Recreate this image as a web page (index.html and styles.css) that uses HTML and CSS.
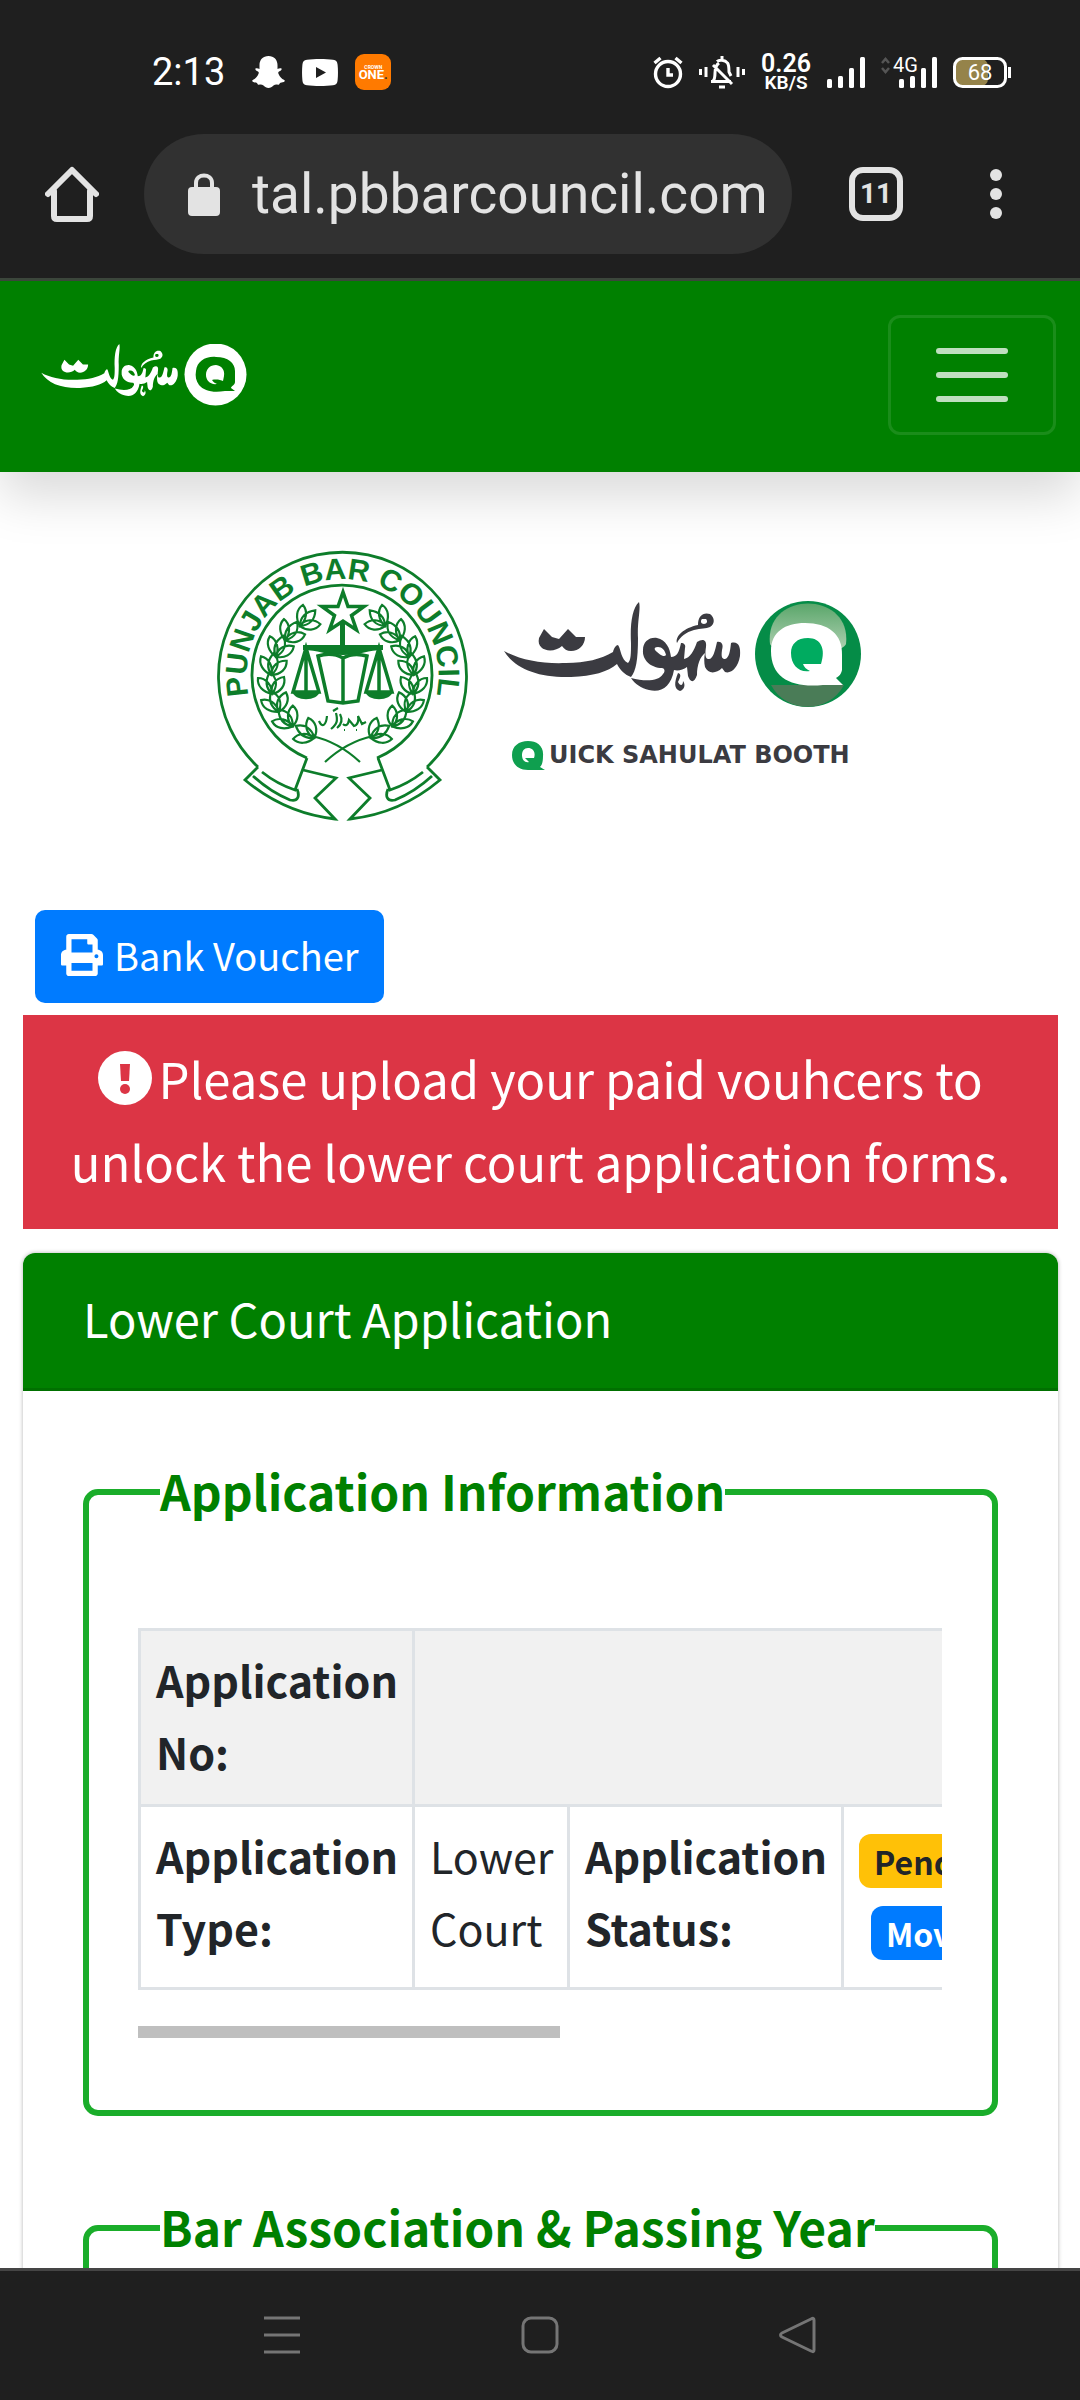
FILE: index.html
```html
<!DOCTYPE html>
<html lang="en">
<head>
<meta charset="utf-8">
<meta name="viewport" content="width=device-width, initial-scale=1">
<title>Lower Court Application</title>
<link rel="stylesheet" href="styles.css">
</head>
<body>
<div class="status">
  <div class="status-left">
    <span class="clock">2:13</span>
    <svg width="33" height="33" viewBox="0 0 33 33" aria-hidden="true"><path fill="#fff" d="M16.500 0c5.500 0 9 3.800 9 9v4c1-.5 2.500-1 4-.6.6 1.300-.5 2.400-2.800 3.400-.7.500-.5 1.400 0 2.500 1 2.400 2.800 4.600 5.600 5.700.9.600.5 1.600-.6 2-1.400.6-3 .4-3.700 1.100-.5.900-.5 1.800-2 1.600-1.800-.2-3.200-.2-4.500.8-1.500 1.400-3 2.500-5 2.500s-3.500-1.100-5-2.500c-1.300-1-2.700-1-4.500-.8-1.500.2-1.500-.7-2-1.600-.7-.7-2.300-.5-3.700-1.100-1.100-.4-1.500-1.400-.6-2 2.800-1.100 4.600-3.300 5.600-5.700.5-1.100.7-2 0-2.500C4 14.800 2.900 13.700 3.500 12.400c1.500-.4 3 .1 4 .6V9c0-5.200 3.500-9 9-9z"/></svg>
    <svg width="36" height="27" viewBox="0 0 36 27" aria-hidden="true"><path fill="#fff" fill-rule="evenodd" d="M5 .8C12-.2 24-.2 31 .8c3.300.4 4.300 2 4.600 5 .5 5 .5 10.400 0 15.400-.3 3-1.300 4.600-4.600 5-7 1-19 1-26 0-3.300-.4-4.300-2-4.600-5-.5-5-.5-10.400 0-15.400C.7 2.800 1.700 1.200 5 .800zM14 8v11l10-5.500z"/></svg>
    <span class="one"><small>CROWN</small><b>ONE<i>.</i></b></span>
  </div>
  <div class="status-right">
    <svg width="30" height="33" viewBox="0 0 30 33" fill="none" stroke="#fff" stroke-width="3.400" aria-hidden="true"><circle cx="15" cy="18" r="12.500"/><path d="M15 12v7h5"/><path d="M1.500 7l6-5M28.500 7l-6-5"/></svg>
    <svg width="46" height="33" viewBox="0 0 46 33" fill="none" stroke="#fff" stroke-width="3" aria-hidden="true"><path d="M1.500 13v6M7 11v10M39 11v10M44.500 13v6M12 25.500h20M14 25c2-2 2-4 2-8 0-5 1-8 4-10M18 5.500c2-2 8-2 10.500 1.500 1.500 2 1.500 6 1.500 9l2 4M14 9l19 19M23 0v4M20 31h6"/></svg>
    <span class="speed"><b>0.26</b><small>KB/S</small></span>
    <svg width="38" height="31" viewBox="0 0 38 31" fill="#fff" aria-hidden="true"><rect y="22" width="5" height="9" rx="1.500"/><rect x="11" y="19" width="5" height="12" rx="1.500"/><rect x="22" y="11" width="5" height="20" rx="1.500"/><rect x="33" width="5" height="31" rx="1.500"/></svg>
    <span class="mobile">
      <svg width="56" height="31" viewBox="0 0 56 31" fill="#fff" aria-hidden="true"><rect x="18" y="22" width="5" height="9" rx="1.500"/><rect x="29" y="19" width="5" height="12" rx="1.500"/><rect x="40" y="11" width="5" height="20" rx="1.500"/><rect x="51" width="5" height="31" rx="1.500"/><path d="M1 6l3.500-4L8 6M1 11l3.500 4L8 11" fill="none" stroke="#555" stroke-width="2.500"/></svg>
      <span class="gen">4G</span>
    </span>
    <span class="battery">
      <svg width="58" height="31" viewBox="0 0 58 31" aria-hidden="true"><rect x="2" y="2" width="33" height="27" rx="7" fill="#95834a"/><path fill="#1f1f1f" d="M35 3h17v25H35z"/><rect x="1.500" y="1.500" width="51" height="28" rx="8" fill="none" stroke="#fff" stroke-width="3"/><rect x="55" y="10" width="3" height="11" fill="#fff"/></svg>
      <span class="level">68</span>
    </span>
  </div>
</div>

<div class="browser">
  <button class="plain" aria-label="Home"><svg width="54" height="56" viewBox="0 0 54 56" fill="none" stroke="#e3e3e3" stroke-width="6" stroke-linecap="round" stroke-linejoin="round"><path d="M3 28L27 4l24 24M9 25v25c0 2 1 3 3 3h30c2 0 3-1 3-3V25"/></svg></button>
  <div class="address">
    <svg width="32" height="43" viewBox="0 0 32 43" aria-hidden="true"><rect y="14" width="32" height="29" rx="4" fill="#e3e3e3"/><path d="M8 15v-5c0-10 16-10 16 0v5" fill="none" stroke="#e3e3e3" stroke-width="4"/></svg>
    <input class="url" type="text" value="tal.pbbarcouncil.com" aria-label="Address">
  </div>
  <button class="tabs" aria-label="Tabs">11</button>
  <button class="plain menu" aria-label="More"><svg width="12" height="50" viewBox="0 0 12 50" fill="#e3e3e3"><circle cx="6" cy="6" r="6"/><circle cx="6" cy="25" r="6"/><circle cx="6" cy="44" r="6"/></svg></button>
</div>

<div class="page">
  <nav class="navbar">
    <a class="brand" href="#" aria-label="Q Sahulat">
      <svg width="206" height="62" viewBox="41 345 206 62" aria-hidden="true">
        <g transform="translate(33.200 320.500) scale(.578 .585)" fill="#fff"><use href="#sahulat"/></g>
        <circle cx="215.500" cy="375.500" r="31" fill="#fff"/>
        <path fill="#008000" fill-rule="evenodd" d="M196 372c1-10 10-15 20-14 12 0 19 6 19 14v11c0 3-4 4-4 6l4 3h-10c-12 2-21 0-26-6-3-4-4-9-3-14zM206 376c0-6 4-10 10-10 6 1 9 5 8 11l-1 5c-2-1-7-2-11-1 1 2 3 3 5 4-7 1-11-4-11-9z"/>
      </svg>
    </a>
    <button class="toggler" aria-label="Menu"><span></span><span></span><span></span></button>
  </nav>

  <main class="content">
    <div class="logos">
      <svg class="seal" width="257" height="274" viewBox="0 0 257 274" fill="none" stroke="#0d7d2a" stroke-width="2.800" role="img" aria-label="Punjab Bar Council">
        <defs>
          <path id="arcText" d="M35 148A96 96 0 1 1 222 148"/>
          <g id="sprig"><path d="M0 3c-6-6-7-14-2-22 7 6 8 14 2 22zM0 3c-2-9 4-16 12-17 2 8-3 15-12 17zM0 3c-9-2-15-8-14-16 8 0 14 7 14 16z"/></g>
          <g id="half">
            <g stroke-width="2.200">
              <use href="#sprig" transform="translate(88 75) rotate(50)"/><use href="#sprig" transform="translate(73 89) rotate(38)"/><use href="#sprig" transform="translate(63 105) rotate(25)"/><use href="#sprig" transform="translate(58 123) rotate(12)"/><use href="#sprig" transform="translate(58 142)"/><use href="#sprig" transform="translate(64 160) rotate(-15)"/><use href="#sprig" transform="translate(77 175) rotate(-35)"/><use href="#sprig" transform="translate(98 187) rotate(-52)"/>
              <path d="M98 187c18 4 34 13 48 26"/>
            </g>
            <path d="M44 218l-13 13c25 21 54 35 90 39l-20-21 21-20-33-8M93 209l-12 32c-12-4-23-10-33-18M39 227c12 11 25 19 37 24 8 2 10-4 7-11"/>
            <path d="M92 99l-13 44h26zM92 99v44" stroke-width="3.500"/>
            <path fill="#0d7d2a" stroke="none" d="M78 142h28c-2 11-26 11-28 0z"/>
          </g>
        </defs>
        <path d="M44 218A124 124 0 1 1 213 218M93 209A90 90 0 1 1 163 209"/>
        <use href="#half"/><use href="#half" transform="matrix(-1 0 0 1 257 0)"/>
        <path stroke-width="3.500" d="M129 43l5 14.500h16l-12.500 9 5 14.500-13.500-9-13.500 9 5-14.500-12.500-9h16z"/>
        <path fill="#0d7d2a" stroke="none" d="M126 73h5v23h38v5c-15 0-22 5-40 5s-25-5-40-5v-5h37z"/>
        <path stroke-width="3.500" d="M104 107l10 45 15 2 15-2 9-45c-10-3-17-2-24 2-7-4-15-5-25-2zM129 109v45"/>
        <path stroke-width="2.200" d="M105 172c3 7 7 5 8-5M117 180c6-5 7-8 5-16M123 179c5-4 6-8 3-14M129 175c2 2 5 2 6-4l5 6c4-1 5-6 4-10l4 8 4-2M119 162l5-3M130 181h1M142 181h1"/>
        <text class="seal-text" fill="#0d7d2a" stroke="none"><textPath href="#arcText" startOffset="50%" text-anchor="middle">PUNJAB BAR COUNCIL</textPath></text>
      </svg>
      <div class="booth">
        <svg width="358" height="107" viewBox="14 40 358 107" role="img" aria-label="Sahulat Q">
          <defs>
            <g id="sahulat">
              <path d="M14 91c16 9 38 13 62 12 20 0 35-4 47-11 1-4 3-7 5-7 3 4 3 15 10 18 3-3 3-9 3-20-1-18 1-35 8-41 2 7-2 20-1 36 0 22-2 33-7 39-6-2-11-7-14-13-9 8-24 12-46 13C49 118 25 109 14 91z"/>
              <path d="M49 78l5-9 8 8 7 2 9-10 8 8h9c0 8-6 14-14 14-4 0-7-2-9-5-9 8-26 5-23-8z"/>
              <path fill-rule="evenodd" d="M153 90c0-8 6-13 14-12 9 2 13 10 14 19 6 0 8-5 10-14 3 0 5 2 4 5l-1 11c6-1 10-8 13-17 6-4 10-2 9 5-1 6-1 13 3 12 4 0 6-8 8-17 4-1 7 2 5 8-1 7 0 9 3 9 4-1 5-7 6-16 7-2 10 3 9 13-2 12-9 18-15 16l-3-4c-6 6-14 6-17-1-1-4-1-10 0-14-5 4-8 12-8 22-3 9-7 7-9 1l-1-9c-4 3-9 4-13 3-3 17-13 23-25 20-8-2-14-6-18-12 15 4 28 3 32-4 3-3 1-6-1-6-11 0-20-8-19-18zM165 90c4 4 9 8 11 5-1-5-4-8-8-8-3 0-4 1-3 3z"/>
              <path fill-rule="evenodd" d="M187 83c-2-7 7-15 21-18 0-9 5-13 12-11 5 4 5 10 0 13-4 2-9 1-16 3-8 2-14 7-17 13zM212 59c-2 2-1 5 2 5s4-3 2-5z"/>
              <path d="M188 113c4 1 2 5 0 9 2 4 5 4 5-1 3 4 1 9-3 10-6-2-6-8-2-18z"/>
            </g>
            <linearGradient id="gloss" x2="0" y2="1"><stop offset="0" stop-color="#5aa66a"/><stop offset="1" stop-color="#b4d3b6"/></linearGradient>
          </defs>
          <use href="#sahulat" fill="#3b3b41"/>
          <circle cx="318" cy="94" r="53" fill="#058c47"/>
          <path fill="#4a7c57" d="M281 125h73c-15 29-58 29-73 0z"/>
          <path fill="url(#gloss)" d="M280 84c-6-54 82-54 76 0-4 12-72 12-76 0z"/>
          <circle cx="317" cy="95" r="20" fill="#00ab60"/>
          <path fill="#fff" fill-rule="evenodd" d="M281 91c0-19 14-28 34-28 23 0 38 11 37 32v15c-1 5-4 7-6 8l7 7h-20c-30 3-52-6-52-34zM301 93c0 12 8 20 19 18-4-2-6-4-7-7h18c5-15 0-26-13-26-11 0-17 6-17 15z"/>
        </svg>
        <div class="booth-name">
          <svg width="33" height="29" viewBox="0 0 33 29" aria-hidden="true"><path fill="#0f9f4f" fill-rule="evenodd" d="M0 14C0 5 7 0 16 0s16 5 15 15c0 6-1 9-3 11l5 3H16C6 29 0 23 0 14zM10 14c0 5 3 8 7 7l-4-4h9c2-6-1-10-6-10-4 0-6 3-6 7z"/></svg>
          <span>UICK SAHULAT BOOTH</span>
        </div>
      </div>
    </div>

    <button class="voucher"><svg width="42" height="42" viewBox="0 0 512 512" fill="#fff" aria-hidden="true"><path d="M448 192V77.300c0-8.500-3.400-16.600-9.400-22.600L393.400 9.400c-6-6-14.100-9.400-22.600-9.400H96C78.300 0 64 14.300 64 32v160c-35.300 0-64 28.700-64 64v112c0 8.800 7.200 16 16 16h48v96c0 17.700 14.300 32 32 32h320c17.700 0 32-14.300 32-32v-96h48c8.800 0 16-7.200 16-16V256c0-35.300-28.700-64-64-64zm-64 256H128v-96h256v96zm0-224H128V64h192v48c0 8.800 7.200 16 16 16h48v96zm48 72c-13.300 0-24-10.800-24-24s10.700-24 24-24 24 10.700 24 24-10.700 24-24 24z"/></svg>Bank Voucher</button>

    <div class="alert" role="alert"><svg width="54" height="54" viewBox="0 0 54 54" aria-hidden="true"><circle cx="27" cy="27" r="27" fill="#fff"/><path fill="#dc3545" d="M22 13h10l-1 17h-8z"/><circle cx="27" cy="38" r="5" fill="#dc3545"/></svg>Please upload your paid vouhcers to unlock the lower court application forms.</div>

    <section class="card">
      <h1 class="card-title">Lower Court Application</h1>
      <div class="card-body">
        <fieldset class="group">
          <legend>Application Information</legend>
          <div class="scroller">
            <table class="info">
              <colgroup><col class="c-label"><col class="c-value"><col class="c-label"><col></colgroup>
              <tr class="odd"><th>Application No:</th><td colspan="3"></td></tr>
              <tr class="tall"><th>Application Type:</th><td>Lower Court</td><th>Application Status:</th><td><div class="badges"><span class="badge pending">Pending</span><span class="badge move">Move</span></div></td></tr>
            </table>
          </div>
          <div class="track"><div class="thumb"></div></div>
        </fieldset>
        <fieldset class="group">
          <legend>Bar Association &amp; Passing Year</legend>
        </fieldset>
      </div>
    </section>
  </main>
</div>

<div class="system">
  <button class="plain" aria-label="Recent apps"><svg width="38" height="38" viewBox="0 0 38 38" fill="none" stroke="#757575" stroke-width="3"><path d="M1 2h36M1 19h36M1 36h36"/></svg></button>
  <button class="plain" aria-label="Home screen"><svg width="38" height="38" viewBox="0 0 38 38" fill="none" stroke="#757575" stroke-width="3"><rect x="2" y="2" width="34" height="34" rx="8"/></svg></button>
  <button class="plain" aria-label="Back"><svg width="38" height="38" viewBox="0 0 38 38" fill="none" stroke="#757575" stroke-width="3" stroke-linejoin="round"><path d="M35 4v30c0 2-1 2-3 1L3 21c-2-1-2-3 0-4L32 3c2-1 3-1 3 1z"/></svg></button>
</div>
</body>
</html>
```
FILE: styles.css
```css
* { box-sizing: border-box; }
body {
  margin: 0;
  height: 100vh;
  display: flex;
  flex-direction: column;
  overflow: hidden;
  background: #fff;
  color: #212529;
  font-family: "Noto Sans CJK SC", "Noto Sans", sans-serif;
  font-size: 43px;
  line-height: 72px;
}
button { font: inherit; cursor: pointer; }
svg { display: block; flex: none; }
.plain { border: 0; padding: 0; background: none; }

.status {
  flex: none;
  height: 134px;
  padding: 10px 69px 0 152px;
  display: flex;
  justify-content: space-between;
  align-items: center;
  background: #1f1f1f;
  color: #fff;
  font-family: Roboto, sans-serif;
}
.status-left, .status-right { display: flex; align-items: center; }
.status-left { gap: 17px; }
.status-right { gap: 16px; }
.clock { font-size: 38px; line-height: 40px; margin-right: 10px; }
.one {
  width: 36px;
  height: 36px;
  border-radius: 9px;
  background: #ff7a00;
  display: flex;
  flex-direction: column;
  align-items: center;
  justify-content: center;
}
.one small { font-size: 5px; line-height: 5px; font-weight: 700; }
.one b { font-size: 13px; line-height: 10px; }
.one i { color: #333; font-style: normal; }
.speed { display: flex; flex-direction: column; align-items: center; font-weight: 600; }
.speed b { font-size: 25px; line-height: 21px; font-weight: 600; }
.speed small { font-size: 19px; line-height: 18px; }
.mobile, .battery { position: relative; }
.gen { position: absolute; left: 12px; top: -1px; font-size: 20px; line-height: 18px; }
.level { position: absolute; inset: 0 4px 0 0; text-align: center; font-size: 22px; line-height: 31px; }

.browser {
  flex: none;
  height: 147px;
  padding: 0 78px 24px 45px;
  border-bottom: 3px solid #3b463b;
  display: flex;
  align-items: center;
  background: #1f1f1f;
}
.address {
  flex: 1;
  min-width: 0;
  height: 120px;
  margin: 0 57px 0 45px;
  padding: 0 16px 0 44px;
  border-radius: 60px;
  background: #313131;
  display: flex;
  align-items: center;
  gap: 32px;
}
.url {
  flex: 1;
  min-width: 0;
  padding: 0;
  border: 0;
  outline: 0;
  background: none;
  color: #e3e3e3;
  font-family: Roboto, sans-serif;
  font-size: 55px;
}
.tabs {
  width: 54px;
  height: 54px;
  padding: 0;
  border: 6px solid #e3e3e3;
  border-radius: 14px;
  background: none;
  color: #e3e3e3;
  font: 700 28px/42px Roboto, sans-serif;
}
.menu { margin-left: 87px; }

.page { flex: 1; min-height: 0; overflow: hidden; }
.navbar {
  height: 191px;
  padding: 0 24px 3px 41px;
  display: flex;
  align-items: center;
  justify-content: space-between;
  background: #008000;
  box-shadow: 0 24px 48px rgba(0, 0, 0, .15);
}
.toggler {
  width: 168px;
  height: 120px;
  padding: 0;
  border: 3px solid rgba(255, 255, 255, .1);
  border-radius: 12px;
  background: none;
  display: flex;
  flex-direction: column;
  align-items: center;
  justify-content: center;
  gap: 18px;
}
.toggler span { width: 72px; height: 6px; border-radius: 3px; background: #bfdfbf; }

.content { padding: 0 22px 0 23px; }
.logos { height: 438px; padding: 77px 0 0 191px; display: flex; gap: 33px; }
.seal-text { font: 700 30px "Liberation Sans", sans-serif; }
.booth { padding-top: 51px; }
.booth-name { margin-top: 34px; padding-left: 8px; display: flex; align-items: center; }
.booth-name span {
  padding-left: 4px;
  color: #3b3b41;
  font: 700 24px/29px "DejaVu Sans", sans-serif;
  white-space: nowrap;
}

.voucher {
  height: 93px;
  margin-left: 12px;
  padding: 0 25px 4px 26px;
  border: 0;
  border-radius: 10px;
  background: #007bff;
  color: #fff;
  font-size: 38px;
  display: flex;
  align-items: center;
  gap: 11px;
}
.alert {
  margin-top: 12px;
  padding: 21px 24px 27px;
  background: #dc3545;
  color: #fff;
  font-size: 49px;
  line-height: 83px;
  text-align: center;
}
.alert svg { display: inline-block; vertical-align: -6px; margin-right: 6px; }

.card {
  margin-top: 24px;
  border-radius: 12px;
  box-shadow: 0 0 4px rgba(0, 0, 0, .3);
}
.card-title {
  margin: 0;
  height: 138px;
  padding: 0 60px;
  border-bottom: 3px solid #007000;
  border-radius: 12px 12px 0 0;
  background: #008000;
  color: #fff;
  font-size: 47px;
  font-weight: 400;
  line-height: 130px;
}
.card-body { padding: 66px 60px; }
.group {
  min-width: 0;
  margin: 0 0 77px;
  padding: 101px 50px 72px 49px;
  border: 6px solid #1aad2a;
  border-radius: 15px;
}
.group legend {
  margin-left: 22px;
  padding: 0 0 4px;
  color: #008000;
  font-size: 48px;
  font-weight: 700;
  line-height: 66px;
}
.scroller { overflow: hidden; }
.info { width: 1230px; table-layout: fixed; border-collapse: collapse; }
.c-label { width: 274px; }
.c-value { width: 155px; }
.info th, .info td {
  border: 3px solid #dee2e6;
  padding: 12px 15px 17px;
  text-align: left;
  vertical-align: top;
}
.info .odd { background: #f1f1f1; }
.info .tall { height: 183px; }
.badges {
  padding-top: 15px;
  display: flex;
  flex-direction: column;
  align-items: flex-start;
  gap: 18px;
}
.badge {
  padding: 0 15px;
  border-radius: 12px;
  font-size: 32px;
  font-weight: 700;
  line-height: 54px;
}
.pending { background: #ffc107; color: #212529; }
.move { margin-left: 12px; background: #007bff; color: #fff; }
.track { margin-top: 36px; }
.thumb { width: 422px; height: 12px; background: #bfbfbf; }

.system {
  flex: none;
  height: 132px;
  padding-bottom: 2px;
  border-top: 3px solid #454545;
  background: #1f1f1f;
  display: flex;
  align-items: center;
  justify-content: center;
  gap: 220px;
}
```
